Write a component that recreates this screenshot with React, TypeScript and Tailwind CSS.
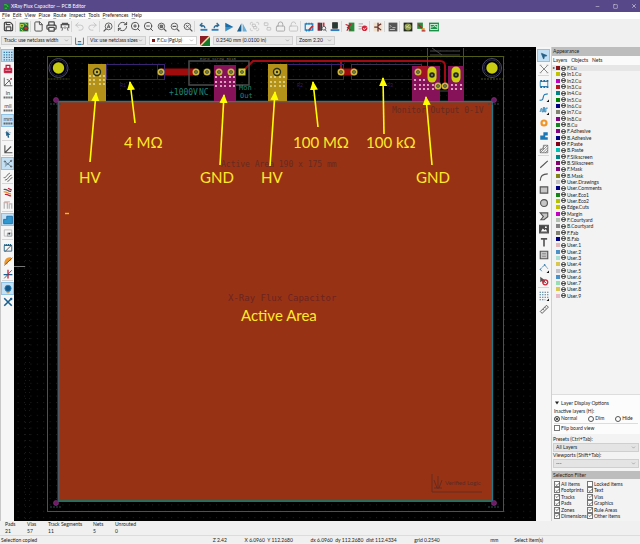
import React, { useState } from 'react';
import {
  Save, File, Printer, Undo2, Redo2, RefreshCw, ZoomIn, ZoomOut,
  Group, Ungroup, Lock, LockOpen, Minus, Square, X, ChevronDown, Check, MousePointer2,
} from 'lucide-react';

interface Tool {
  name: string;
  icon: React.ReactNode;
  active?: boolean;
  gap?: boolean;
}

interface Layer {
  name: string;
  color: string;
}

// small 16x16 drawing used for the icons lucide does not have
function Glyph({ children }: { children: React.ReactNode }) {
  return (
    <svg viewBox="0 0 16 16" className="size-[10px]" fill="none" stroke="#545454" strokeWidth="1.4">
      {children}
    </svg>
  );
}

const dark = 'size-[11px] text-[#484848]';
const faded = 'size-[11px] text-[#c3c3c3]';

const topTools: Tool[] = [
  { name: 'Save', icon: <Save className={dark} strokeWidth={2.6} /> },
  { name: 'Board setup', gap: true, icon: <Glyph><path d="M1 1h14v14H1z" fill="#1c8a3a" stroke="none" /><path d="M2 4h5v4H2zM9 2l4 3M3 11l3 3" stroke="#d5d84a" /><circle cx="11" cy="10" r="3.4" fill="#c5372c" stroke="#383838" /></Glyph> },
  { name: 'Page settings', gap: true, icon: <File className={dark} /> },
  { name: 'Print', icon: <Printer className={dark} strokeWidth={2.6} /> },
  { name: 'Plot', icon: <Glyph><path d="M2 10V4h12v6M4 4V2h8v2" strokeWidth="2" /><path d="M5 8l-2 6M11 8l2 6M8 7v4" /></Glyph> },
  { name: 'Undo', gap: true, icon: <Undo2 className={faded} /> },
  { name: 'Redo', icon: <Redo2 className={faded} /> },
  { name: 'Find', gap: true, icon: <Glyph><circle cx="9" cy="7" r="5.5" /><path d="M5 11l-4 4" strokeWidth="2" /><path d="M7 10l2-6 2 6M7 8h4" /></Glyph> },
  { name: 'Refresh', gap: true, icon: <RefreshCw className={dark} /> },
  { name: 'Zoom in', icon: <ZoomIn className={dark} /> },
  { name: 'Zoom out', icon: <ZoomOut className={dark} /> },
  { name: 'Zoom to fit', icon: <Glyph><circle cx="7" cy="7" r="5.2" /><path d="M11 11l4 4" strokeWidth="2" /><path d="M5 5h4v4H5z" fill="#777" /></Glyph> },
  { name: 'Zoom to objects', icon: <Glyph><circle cx="7" cy="7" r="5.2" /><path d="M11 11l4 4" strokeWidth="2" /><path d="M4 7h6" strokeWidth="2" /></Glyph> },
  { name: 'Zoom to selection', icon: <Glyph><circle cx="7" cy="7" r="5.2" /><path d="M11 11l4 4" strokeWidth="2" /><path d="M5 5l4 4M9 5L5 9" /></Glyph> },
  { name: 'Rotate left', gap: true, icon: <Glyph><path d="M4 14h11v-3H4z" fill="#2f7fb8" stroke="none" /><path d="M11 10c0-3-2-5-7-5M7 1.500L3.500 5 7 8" stroke="#2d6a96" strokeWidth="2" /></Glyph> },
  { name: 'Rotate right', icon: <Glyph><path d="M1 14h11v-3H1z" fill="#2f7fb8" stroke="none" /><path d="M5 10c0-3 2-5 7-5M9 1.500L12.500 5 9 8" stroke="#2d6a96" strokeWidth="2" /></Glyph> },
  { name: 'Flip vertically', icon: <Glyph><path d="M2 1l13 7H2z" fill="#1a6ea8" stroke="none" /><path d="M2 15l13-7H2z" fill="#3b92c8" stroke="none" /></Glyph> },
  { name: 'Flip horizontally', icon: <Glyph><path d="M7 2v13H0z" fill="#1a5f8e" stroke="none" /><path d="M9 2v13h7z" fill="#6caed4" stroke="none" /></Glyph> },
  { name: 'Group', icon: <Group className={faded} /> },
  { name: 'Ungroup', icon: <Ungroup className={faded} /> },
  { name: 'Lock', icon: <Lock className="size-[11px] text-[#a6a6a6]" /> },
  { name: 'Unlock', icon: <LockOpen className={faded} /> },
  { name: 'Footprint editor', gap: true, icon: <Glyph><path d="M2 3h12v10H2z" stroke="#1a81c4" strokeWidth="2" /><path d="M4 1v3M8 1v3M12 1v3M4 12v3M8 12v3" stroke="#1a81c4" strokeWidth="2" /><path d="M14 6l-6 7" stroke="#c92b35" strokeWidth="3" /></Glyph> },
  { name: 'Footprint library', icon: <Glyph><path d="M1 1h4v13H1z" fill="#8b1f33" stroke="none" /><path d="M5 1h3v13H5z" fill="#3c3c3c" stroke="none" /><path d="M9 1h3v6H9z" fill="#c9303c" stroke="none" /><circle cx="11" cy="10" r="3" /><path d="M13 12l2 3" /></Glyph> },
  { name: 'Update from schematic', icon: <Glyph><path d="M4 1h8v9H4z" fill="#243a33" stroke="#3c3c3c" /><path d="M1 13h14" stroke="#2e7bc0" strokeWidth="3" /></Glyph> },
  { name: 'Update board', gap: true, icon: <Glyph><path d="M6 1h9v14H6z" fill="#2b8b3d" stroke="none" /><path d="M1 4l6 2-3 3 6 4M3 14l6-11" stroke="#b3202c" strokeWidth="1.800" /></Glyph> },
  { name: 'Design rules check', icon: <Glyph><path d="M1 3h7M1 7h5M1 11h4" stroke="#9c9c9c" /><circle cx="10.500" cy="10" r="4.500" fill="#cf2639" stroke="none" /><path d="M8.500 10l1.500 2 3-3" stroke="#fff" /></Glyph> },
  { name: 'Schematic editor', gap: true, icon: <Glyph><path d="M1 1h14v14H1z" fill="#f0dfcb" stroke="none" /><path d="M8 1v14M2 8h6M8 6l5-3M8 9l5 4" stroke="#63302b" strokeWidth="2" /></Glyph> },
  { name: 'Scripting console', gap: true, icon: <Glyph><path d="M1 1h14v14H1z" fill="#555" stroke="none" /><path d="M3 5l2 2-2 2M7 9h5M3 12h8" stroke="#c9c9c9" /></Glyph> },
  { name: 'Gerber viewer', gap: true, icon: <Glyph><path d="M1 1h14v14H1z" fill="#202820" stroke="none" /><circle cx="8" cy="8" r="5.500" fill="#8d9b4b" stroke="none" /><path d="M4 6l8 4M5 10l5-6" stroke="#d6d69a" /></Glyph> },
  { name: 'Board viewer', icon: <Glyph><path d="M2 1h9v10H2z" fill="#2b8b3d" stroke="none" /><path d="M4 4l8 9M9 14h6" stroke="#b3202c" strokeWidth="2" /><path d="M9 10h5v3H9z" fill="#d8a327" stroke="none" /></Glyph> },
  { name: 'Fabrication', icon: <Glyph><path d="M0 1h16v14H0z" fill="#1c8f49" stroke="none" /><path d="M2 4h12v8H2zM2 8h4l2-2h2l1 2h3" stroke="#e3f5e6" strokeWidth="1.400" /></Glyph> },
];

const leftTools: Tool[] = [
  { name: 'Grid', active: true, icon: <Glyph><path d="M1 2h14M1 6h14M1 10h14M1 14h14" stroke="#28749f" strokeWidth="2" strokeDasharray="2 2" /></Glyph> },
  { name: 'Grid override', icon: <Glyph><path d="M2 7h12v7H2z" fill="#c2183c" stroke="#c2183c" /><path d="M5 7V2h6v5" stroke="#c2183c" strokeWidth="2" /><path d="M4 10h8" stroke="#fff" strokeDasharray="2 1" /></Glyph> },
  { name: 'Polar coordinates', icon: <Glyph><path d="M2 1v13h13M2 14L12 4" /><path d="M6 4c4 0 6 4 6 8" /><circle cx="13" cy="3" r="1.500" fill="#c2183c" stroke="none" /></Glyph> },
  { name: 'Inches', icon: <Glyph><text x="8" y="8" fontSize="9" textAnchor="middle" fill="#444" stroke="none">in</text><path d="M1 12h14" strokeWidth="3" strokeDasharray="2 1" /></Glyph> },
  { name: 'Mils', icon: <Glyph><text x="8" y="8" fontSize="9" textAnchor="middle" fill="#444" stroke="none">mil</text><path d="M1 12h14" strokeWidth="3" strokeDasharray="2 1" /></Glyph> },
  { name: 'Millimeters', active: true, icon: <Glyph><text x="8" y="8" fontSize="9" textAnchor="middle" fill="#444" stroke="none">mm</text><path d="M1 12h14" strokeWidth="3" strokeDasharray="2 1" /></Glyph> },
  { name: 'Full-window crosshair', icon: <Glyph><path d="M8 2v12M3 6h10" stroke="#9bb8ca" /><path d="M5 3l7 6-3 .5 1 4-2 .5-1-4-2 1z" fill="#215f85" stroke="none" /></Glyph> },
  { name: 'Constrain to 45 degrees', gap: true, icon: <Glyph><path d="M3 2v12h12M3 14L13 4" strokeWidth="1.800" /></Glyph> },
  { name: 'Ratsnest', active: true, gap: true, icon: <Glyph><path d="M3 4l10 8M3 12l10-9M3 8h7" stroke="#607c8c" /><circle cx="3" cy="4" r="1" /><circle cx="13" cy="12" r="1" /><circle cx="13" cy="3" r="1" /></Glyph> },
  { name: 'Curved ratsnest', icon: <Glyph><path d="M1 9c5 1 6-7 10-7M3 13c6 0 6-8 11-8M7 15c4 0 4-6 8-6" /></Glyph> },
  { name: 'Net colors', gap: true, icon: <Glyph><path d="M1 4c6-2 6 4 12 3" stroke="#555" strokeWidth="2" /><path d="M1 8c6-2 6 4 12 3" stroke="#ec8b2d" strokeWidth="2" /><path d="M3 12c5-2 5 3 10 2M8 2l6 3" stroke="#c3203c" strokeWidth="2" /></Glyph> },
  { name: 'Highlight nets', icon: <Glyph><path d="M2 14V4h5v10M10 14V6h4v8" stroke="#b7b7b7" strokeWidth="2" /><path d="M2 3h9" stroke="#e4a9a0" strokeWidth="2" /></Glyph> },
  { name: 'Filled zones', active: true, gap: true, icon: <Glyph><path d="M1 7h5V2h9v12H1z" fill="#3197cf" stroke="#1a6ea8" /></Glyph> },
  { name: 'Zone outlines', icon: <Glyph><path d="M2 3h12v10H2z" stroke="#b8b8b8" /><path d="M7 8h7v5H7z" fill="#dde9ef" stroke="#9c9c9c" /><circle cx="10" cy="9" r="1.500" fill="#333" stroke="none" /></Glyph> },
  { name: 'Sketch pads', gap: true, icon: <Glyph><path d="M2 4h12v9H2z" stroke="#1c5e80" /><path d="M2 3h12" stroke="#1c5e80" strokeWidth="3" strokeDasharray="2 1" /><path d="M3 14L14 3" stroke="#4a4a4a" /></Glyph> },
  { name: 'Sketch vias', icon: <Glyph><path d="M2 13C2 5 6 2 13 2v5c-4 0-6 2-6 6z" fill="#f09a2e" stroke="none" /><path d="M2 15L15 3" /></Glyph> },
  { name: 'Sketch tracks', icon: <Glyph><path d="M1 9h14" stroke="#1a5f8e" strokeWidth="2" /><path d="M8 1v14" stroke="#c2183c" strokeWidth="2" /><path d="M2 15L14 2" stroke="#555" /></Glyph> },
  { name: 'Appearance manager', active: true, gap: true, icon: <Glyph><circle cx="8" cy="7" r="5" fill="#15598a" stroke="#2b88c4" /><path d="M5 13h6l-3 2z" fill="#c78c3a" stroke="none" /></Glyph> },
  { name: 'Properties', icon: <Glyph><path d="M2 2l12 12M14 2L2 14" stroke="#1a5f8e" strokeWidth="2.500" /><circle cx="13" cy="3" r="2" fill="#1a5f8e" stroke="none" /></Glyph> },
];

const corner = <path d="M16 12v4h-4z" fill="#111" stroke="none" />;

const rightTools: Tool[] = [
  { name: 'Select', active: true, icon: <MousePointer2 className="size-[8px] fill-[#255f85] text-[#255f85]" /> },
  { name: 'Local ratsnest', icon: <Glyph><path d="M2 2l12 12M14 2L2 14" stroke="#777" /><path d="M1 2h3M12 14h3M12 2h3M1 14h3" stroke="#999" /></Glyph> },
  { name: 'Add footprint', gap: true, icon: <Glyph><path d="M2 4h12v8H2z" stroke="#1b82bf" /><path d="M2 3h13M2 13h13" stroke="#1e6896" strokeWidth="3" strokeDasharray="3 2" /></Glyph> },
  { name: 'Route tracks', icon: <Glyph><path d="M1 13c8 2 4-7 8-9l5-1" stroke="#1d7ab4" strokeWidth="1.800" />{corner}</Glyph> },
  { name: 'Tune length', icon: <Glyph><path d="M1 10h2V6h2v5h2V4h2v7h2V5h3" stroke="#1d7ab4" strokeWidth="1.400" />{corner}</Glyph> },
  { name: 'Add via', icon: <Glyph><circle cx="8" cy="8" r="4" stroke="#f09426" strokeWidth="3.500" /></Glyph> },
  { name: 'Add zone', icon: <Glyph><path d="M2 7h5V2h7v5h-4v3h4v4H2z" fill="#1c77b5" stroke="none" /></Glyph> },
  { name: 'Rule area', icon: <Glyph><path d="M2 11l4-4M2 14L14 2M6 14l8-8M10 14l4-4M6 6l4-4M7 2h7v12H2V8h5z" strokeWidth="1" /></Glyph> },
  { name: 'Line', gap: true, icon: <Glyph><path d="M2 14L14 3" strokeWidth="1.800" /></Glyph> },
  { name: 'Arc', icon: <Glyph><path d="M2 14C2 7 6 3 14 3" strokeWidth="1.800" /></Glyph> },
  { name: 'Rectangle', icon: <Glyph><path d="M2 3h12v10H2z" fill="#c6c6c6" strokeWidth="1.800" /></Glyph> },
  { name: 'Circle', icon: <Glyph><circle cx="8" cy="8" r="5.500" fill="#c6c6c6" strokeWidth="1.800" /></Glyph> },
  { name: 'Polygon', icon: <Glyph><path d="M2 3h12v6l-6 5H3l4-5z" fill="#c6c6c6" strokeWidth="1.800" /></Glyph> },
  { name: 'Image', icon: <Glyph><path d="M1 2h14v12H1z" fill="#484848" strokeWidth="2" /><path d="M3 12l3-5 3 3 2-2 2 4z" fill="#fff" stroke="none" /><circle cx="11" cy="5" r="1.500" fill="#fff" stroke="none" /></Glyph> },
  { name: 'Text', icon: <Glyph><path d="M3 3h10M8 3v12" strokeWidth="2.600" /></Glyph> },
  { name: 'Text box', icon: <Glyph><path d="M2 2h12v12H2z" fill="#c6c6c6" strokeWidth="1.800" /><path d="M5 6h6M5 10h6" strokeWidth="1.600" stroke="#888" /></Glyph> },
  { name: 'Dimension', icon: <Glyph><path d="M2 10l7-7 5 6M2 10l3 4" stroke="#3a7eae" strokeDasharray="4 1" /><circle cx="2" cy="10" r="1" fill="#3a7eae" stroke="none" /><circle cx="9" cy="3" r="1.300" fill="#3a7eae" stroke="none" />{corner}</Glyph> },
  { name: 'Delete', icon: <Glyph><path d="M2 1v9l3-2 3 4 2-5z" fill="#555" stroke="none" /><circle cx="10" cy="10" r="4" stroke="#cf2639" strokeWidth="2" /><path d="M8 8l4 4" stroke="#cf2639" /></Glyph> },
  { name: 'Grid origin', gap: true, icon: <Glyph><path d="M1 2h14M1 6h14M1 10h14M1 14h9" strokeWidth="1.800" strokeDasharray="2 2" stroke="#38688a" />{corner}</Glyph> },
  { name: 'Measure', icon: <Glyph><path d="M2 12L12 2l3 3L5 15z" fill="#ededed" /><path d="M6 8l2 2M9 5l2 2" /></Glyph> },
];

const layers: Layer[] = [
  { name: 'F.Cu', color: '#8a1414' },
  { name: 'In1.Cu', color: '#c2c200' },
  { name: 'In2.Cu', color: '#c200c2' },
  { name: 'In3.Cu', color: '#b8141e' },
  { name: 'In4.Cu', color: '#008484' },
  { name: 'In5.Cu', color: '#008400' },
  { name: 'In6.Cu', color: '#000084' },
  { name: 'In7.Cu', color: '#848472' },
  { name: 'In8.Cu', color: '#840084' },
  { name: 'B.Cu', color: '#148420' },
  { name: 'F.Adhesive', color: '#840084' },
  { name: 'B.Adhesive', color: '#000084' },
  { name: 'F.Paste', color: '#840014' },
  { name: 'B.Paste', color: '#00c2b4' },
  { name: 'F.Silkscreen', color: '#008484' },
  { name: 'B.Silkscreen', color: '#84006e' },
  { name: 'F.Mask', color: '#840084' },
  { name: 'B.Mask', color: '#848414' },
  { name: 'User.Drawings', color: '#c2c2c2' },
  { name: 'User.Comments', color: '#000084' },
  { name: 'User.Eco1', color: '#148414' },
  { name: 'User.Eco2', color: '#b4c200' },
  { name: 'Edge.Cuts', color: '#c2c200' },
  { name: 'Margin', color: '#c200c2' },
  { name: 'F.Courtyard', color: '#b4c2b4' },
  { name: 'B.Courtyard', color: '#848484' },
  { name: 'F.Fab', color: '#848472' },
  { name: 'B.Fab', color: '#000084' },
  { name: 'User.1', color: '#e0b8bc' },
  { name: 'User.2', color: '#4c92c8' },
  { name: 'User.3', color: '#a8e0d4' },
  { name: 'User.4', color: '#d8c850' },
  { name: 'User.5', color: '#c2c2c8' },
  { name: 'User.6', color: '#4c92c8' },
  { name: 'User.7', color: '#98e0b4' },
  { name: 'User.8', color: '#d8c850' },
  { name: 'User.9', color: '#e8b8c4' },
];

const filters = [
  'All items', 'Locked items', 'Footprints', 'Text', 'Tracks', 'Vias',
  'Pads', 'Graphics', 'Zones', 'Rule Areas', 'Dimensions', 'Other items',
];

const stats = [
  { label: 'Pads', value: '21', width: 'w-[22px]' },
  { label: 'Vias', value: '57', width: 'w-[21px]' },
  { label: 'Track Segments', value: '11', width: 'w-[45px]' },
  { label: 'Nets', value: '5', width: 'w-[22px]' },
  { label: 'Unrouted', value: '0', width: 'w-[30px]' },
];

function ToolButton({ tool }: { tool: Tool }) {
  return (
    <button
      type="button"
      aria-label={tool.name}
      className={`flex size-[13px] shrink-0 items-center justify-center ${tool.active ? 'border border-[#8fc3e8] bg-[#c4e0f4]' : ''}`}
    >
      {tool.icon}
    </button>
  );
}

function Combo({ label, value, className, children }: { label: string; value: string; className: string; children?: React.ReactNode }) {
  return (
    <div className={`flex h-[9px] items-center border border-[#cfcfcf] px-[2px] ${className}`}>
      {children}
      <select aria-label={label} className="min-w-0 flex-1 appearance-none bg-transparent leading-[7px] outline-none" defaultValue={value}>
        <option>{value}</option>
      </select>
      <ChevronDown className="size-[5px] shrink-0 text-[#666]" />
    </div>
  );
}

function TickBox({ label, checked }: { label: string; checked: boolean }) {
  const [on, setOn] = useState(checked);

  return (
    <label className="flex items-center gap-[1px] whitespace-nowrap">
      <span className="grid size-[6px] shrink-0 place-items-center">
        <input type="checkbox" checked={on} onChange={() => setOn(!on)} className="col-start-1 row-start-1 size-[6px] appearance-none border border-[#777] bg-white" />
        {on && <Check className="pointer-events-none col-start-1 row-start-1 size-[5px] text-[#222]" strokeWidth={3} />}
      </span>
      {label}
    </label>
  );
}

function Pad({ x, y, square }: { x: number; y: number; square?: boolean }) {
  return (
    <g>
      {square ? <rect x={x - 3.5} y={y - 3.5} width="7" height="7" fill="#d2cc38" /> : <circle cx={x} cy={y} r="3.5" fill="#d0b840" />}
      <circle cx={x} cy={y} r="1.8" fill="#2b3a1c" />
      <circle cx={x} cy={y} r="0.7" fill="#d8d8b0" />
    </g>
  );
}

function Stitching({ xs, ys, color }: { xs: number[]; ys: number[]; color: string }) {
  return (
    <g fill={color}>
      {ys.map((y) => xs.map((x) => <circle key={`${x}-${y}`} cx={x} cy={y} r="1.1" />))}
    </g>
  );
}

function MountingHole({ x, y }: { x: number; y: number }) {
  return (
    <g fill="none">
      <circle cx={x} cy={y} r="9.5" stroke="#4b4b6c" strokeWidth="1" />
      <circle cx={x} cy={y} r="8" stroke="#23234a" strokeWidth="1" />
      <circle cx={x} cy={y} r="5.7" fill="#c8cc12" />
      <path d={`M${x - 11} ${y + 11}h22`} stroke="#4b5020" strokeDasharray="2 1" />
    </g>
  );
}

const notes = [
  { text: 'HV', x: 79, y: 183 },
  { text: '4 MΩ', x: 124, y: 148 },
  { text: 'GND', x: 200, y: 183 },
  { text: 'HV', x: 261, y: 183 },
  { text: '100 MΩ', x: 293, y: 148 },
  { text: '100 kΩ', x: 366, y: 148 },
  { text: 'GND', x: 416, y: 183 },
  { text: 'Active Area', x: 241, y: 321 },
];

const arrows = [
  [90, 162, 96, 93], [135, 123, 130, 82], [220, 165, 224, 95], [270, 166, 275, 92],
  [318, 127, 313, 82], [384, 134, 383, 78], [432, 165, 426, 97],
];

const fiducials = [[56, 100], [494, 100], [56, 503], [494, 503]];

function Board() {
  return (
    <svg viewBox="14 47 522 474" className="block h-full w-full bg-black">
      <defs>
        <pattern id="grid" x="24" y="50" width="6.4" height="6.4" patternUnits="userSpaceOnUse">
          <rect width="1" height="1" fill="#202020" />
        </pattern>
        <marker id="head" viewBox="0 0 10 10" refX="9" refY="5" markerWidth="9" markerHeight="9" markerUnits="userSpaceOnUse" orient="auto">
          <path d="M0 .5l10 4.500-10 4.500z" fill="#ffff00" />
        </marker>
      </defs>
      <rect x="14" y="47" width="522" height="474" fill="#000" />
      <rect x="14" y="47" width="522" height="474" fill="url(#grid)" />
      <path d="M25.500 50v470M29.500 50v470" stroke="#32100f" strokeDasharray="1 5" />
      <path d="M14 266.500h11" stroke="#777" />
      <rect x="47.500" y="56.500" width="456" height="455" fill="none" stroke="#525a18" />

      {/* copper pour */}
      <rect x="58" y="101" width="434" height="400" fill="#983214" />
      <path d="M58 101.500h434.500V501" fill="none" stroke="#25788a" strokeWidth="1.400" />
      <path d="M58.500 101v400" stroke="#4b5a66" strokeWidth="2" />
      <path d="M58 501h434" stroke="#2c6c5c" strokeWidth="2" />
      {fiducials.map(([x, y]) => (
        <g key={`${x}-${y}`}>
          <circle cx={x} cy={y} r="2.500" fill="#6c1c66" stroke="#8c3480" strokeWidth="0.600" />
          <path d={`M${x - 6} ${y + 4}h12`} stroke="#2b4f4a" strokeDasharray="2 1" />
        </g>
      ))}
      <MountingHole x={58.5} y={68} />
      <MountingHole x={492} y={68} />

      {/* tracks */}
      <path d="M161 72h35M341 72h14" stroke="#a00c0c" strokeWidth="7" />
      <path d="M242 72l11-11h187q5 0 5 5v20M341 61v10" fill="none" stroke="#a00c14" strokeWidth="2" />
      <g fill="none" strokeWidth="1">
        <rect x="106.500" y="64.500" width="58" height="15" stroke="#3a2470" />
        <path d="M157.500 65v14M331.500 65v14" stroke="#22228c" />
        <rect x="287.500" y="64.500" width="56" height="15" stroke="#3a2470" />
        <rect x="351.500" y="64.500" width="70" height="15" stroke="#3c3050" />
        <rect x="189" y="61" width="60" height="24" stroke="#4c4c4c" strokeWidth="1.500" />
        <path d="M427.500 48v43h36V48M430 51h30M430 55h30M432 48l10 7" stroke="#484848" />
      </g>
      <g fontFamily="Liberation Mono, monospace" fontSize="5" fill="#3a1c66">
        <text x="120" y="87">R1</text>
        <text x="297" y="87">R2</text>
        <text x="387" y="87">R3</text>
        <text x="200" y="60" fontSize="4" fill="#707070">Euro Screw 5x15</text>
      </g>

      {/* pads */}
      <rect x="88" y="64" width="18" height="37" fill="#b4921a" />
      <rect x="268" y="64" width="19" height="37" fill="#b4921a" />
      <rect x="214" y="65" width="22" height="36" fill="#86125a" />
      <rect x="412" y="66" width="28" height="35" fill="#86125a" />
      <rect x="448" y="66" width="16" height="35" fill="#86125a" />
      <rect x="418" y="66" width="10" height="11" fill="#a01224" />
      <Stitching xs={[90, 94, 100, 104]} ys={[76, 80, 84]} color="#e4d890" />
      <Stitching xs={[271, 275, 280, 284]} ys={[77, 82, 86]} color="#e4d890" />
      <Stitching xs={[216, 221, 225, 230, 234]} ys={[77, 82, 86]} color="#f0c0d8" />
      <Stitching xs={[415, 420, 424]} ys={[80, 85, 89]} color="#f0c0d8" />
      <Stitching xs={[428, 433]} ys={[85, 89]} color="#f0c0d8" />
      <Stitching xs={[452, 456, 461]} ys={[85, 89]} color="#f0c0d8" />
      {[97, 277].map((x) => (
        <g key={x}>
          <circle cx={x} cy="72" r="3.500" fill="#d6b834" stroke="#26301a" strokeWidth="1.400" />
          <circle cx={x} cy="72" r="1.200" fill="#26301a" />
        </g>
      ))}
      {[161, 196, 207, 219, 231, 341, 354, 418].map((x) => <Pad key={x} x={x} y={72} />)}
      <Pad x={242} y={72} square />
      <Pad x={438} y={86} />
      <Pad x={445} y={86} />
      {[432, 456].map((x) => (
        <g key={x}>
          <rect x={x - 4.5} y="66.500" width="9" height="16" rx="4.500" fill="#ccd010" />
          <circle cx={x} cy="75" r="2.800" fill="#23281c" />
          <circle cx={x} cy="75" r="0.800" fill="#c8c8a0" />
        </g>
      ))}

      {/* silkscreen */}
      <g fontFamily="DejaVu Sans Mono, monospace" fontSize="8">
        <g fill="#208272">
          <text x="169" y="95">+1000V</text>
          <text x="199" y="95">NC</text>
          <text x="239" y="90" fontSize="7">Mon</text>
          <text x="240" y="98" fontSize="7">Out</text>
        </g>
        <g fill="#662a20">
          <text x="221" y="167">Active Area 190 x 175 mm</text>
          <text x="392" y="113">Monitor Output 0-1V</text>
        </g>
        <g fill="#6b2422">
          <text x="228" y="301" fontSize="9">X-Ray Flux Capacitor</text>
        </g>
      </g>
      <g fill="none" stroke="#662a20">
        <path d="M432 492h50M432 474v18M434 480l3 8M438 476v13M442 480l-3 8M434 488h8" />
      </g>
      <text x="445" y="485" fontFamily="Lato, sans-serif" fontSize="6" fill="#5a2a26">Verified Logic</text>
      <path d="M65 213.500h4" stroke="#e8c010" strokeWidth="1.400" />

      {/* notes */}
      <g stroke="#ffff00" strokeWidth="1.600">
        {arrows.map(([x1, y1, x2, y2]) => (
          <line key={x1} x1={x1} y1={y1} x2={x2} y2={y2} markerEnd="url(#head)" />
        ))}
      </g>
      <g fontFamily="Lato, Noto Sans, sans-serif" fontSize="15" fill="#ffe928">
        {notes.map((note) => <text key={note.text + note.x} x={note.x} y={note.y}>{note.text}</text>)}
      </g>
    </svg>
  );
}

function AppearancePanel() {
  const [inactive, setInactive] = useState('Normal');

  return (
    <aside className="flex w-[89px] shrink-0 flex-col border-l border-[#d0d0d0] bg-[#f3f3f3]">
      <h2 className="h-[9px] bg-[#bdbdbd] px-[1px] leading-[9px]">Appearance</h2>
      <div role="tablist" className="flex h-[9px] items-center gap-[4px] bg-[#fafafa] px-[1px]">
        <button type="button" role="tab" aria-selected="true">Layers</button>
        <button type="button" role="tab">Objects</button>
        <button type="button" role="tab">Nets</button>
      </div>
      <ul className="flex h-[234px] flex-col justify-between">
        {layers.map((layer, i) => (
          <li key={layer.name} className={`flex h-[6px] items-center gap-[1px] pl-[1px] leading-[6px] ${i === 0 ? 'bg-[#e6e6e6]' : ''}`}>
            <span className="w-[2px] text-[4px]">{i === 0 ? '▸' : ''}</span>
            <span className="size-[4px]" style={{ backgroundColor: layer.color }} />
            <svg viewBox="0 0 10 10" className="size-[5px]" fill="none" stroke="#333" strokeWidth="1.800">
              <circle cx="5" cy="5" r="4" />
              <path d="M1 5h8" />
            </svg>
            <span>{layer.name}</span>
          </li>
        ))}
      </ul>
      <div className="mt-auto flex flex-col gap-[1px] border-t border-[#ddd] bg-[#fcfcfc] px-[2px] pt-[4px] pb-[2px]">
        <div className="flex h-[8px] items-center gap-[2px] px-[1px]">
          <svg viewBox="0 0 8 8" className="size-[4px]"><path d="M0 1h8L4 7z" fill="#222" /></svg>
          Layer Display Options
        </div>
        <fieldset>
          <legend className="h-[7px] leading-[7px]">Inactive layers (H):</legend>
          <div className="flex h-[7px] items-center gap-[11px]">
            {['Normal', 'Dim', 'Hide'].map((mode) => (
              <label key={mode} className="flex items-center gap-[1px]">
                <input
                  type="radio"
                  name="inactive"
                  checked={inactive === mode}
                  onChange={() => setInactive(mode)}
                  className="size-[6px] appearance-none rounded-full border border-[#555] bg-white checked:bg-[#222] checked:shadow-[inset_0_0_0_1px_white]"
                />
                {mode}
              </label>
            ))}
          </div>
        </fieldset>
        <div className="flex h-[9px] items-center border-t border-[#ddd]">
          <TickBox label="Flip board view" checked={false} />
        </div>
      </div>
      <div className="flex flex-col px-[1px] pt-[2px] pb-[3px]">
        <span className="h-[7px] leading-[7px]">Presets (Ctrl+Tab):</span>
        <Combo label="Presets" value="All Layers" className="bg-[#e4e4e4]" />
        <span className="h-[7px] leading-[7px]">Viewports (Shift+Tab):</span>
        <Combo label="Viewports" value="---" className="bg-[#e4e4e4]" />
      </div>
      <h2 className="h-[8px] bg-[#bdbdbd] px-[1px] leading-[8px]">Selection Filter</h2>
      <div className="grid h-[42px] grid-cols-[33px_1fr] content-between px-[2px] py-[2px] leading-[6px]">
        {filters.map((name) => <TickBox key={name} label={name} checked={name !== 'Locked items'} />)}
      </div>
    </aside>
  );
}

function App() {
  return (
    <div className="flex min-h-screen flex-col bg-[#f0f0f0] font-[Lato,sans-serif] text-[5px] leading-[7px] text-[#222]">
      <header className="flex h-[12px] items-center bg-[#57488a] px-[3px] text-white">
        <svg viewBox="0 0 12 12" className="size-[7px]">
          <rect width="12" height="12" rx="1" fill="#167a2c" />
          <path d="M2 3h4l3 4M3 9h4" fill="none" stroke="#5cc66c" strokeWidth="1.500" />
        </svg>
        <h1 className="ml-[1px] flex-1">XRay Flux Capacitor — PCB Editor</h1>
        <div className="flex gap-[13px]">
          <button type="button" aria-label="Minimize"><Minus className="size-[5px]" /></button>
          <button type="button" aria-label="Maximize"><Square className="size-[5px]" /></button>
          <button type="button" aria-label="Close"><X className="size-[6px]" /></button>
        </div>
      </header>

      <nav className="flex h-[7px] items-center gap-[3px] bg-white px-[2px]">
        {['File', 'Edit', 'View', 'Place', 'Route', 'Inspect', 'Tools', 'Preferences', 'Help'].map((item) => (
          <button key={item} type="button"><span className="underline decoration-[#aaa]">{item[0]}</span>{item.slice(1)}</button>
        ))}
      </nav>

      <div className="flex h-[15px] items-center px-[2px]">
        {topTools.map((tool) => (
          <React.Fragment key={tool.name}>
            {tool.gap && <span className="mr-[1px] h-[11px] w-[1px] bg-[#d6d6d6]" />}
            <ToolButton tool={tool} />
          </React.Fragment>
        ))}
      </div>

      <div className="flex h-[13px] items-center gap-[3px] px-[1px]">
        <Combo label="Track width" value="Track: use netclass width" className="w-[71px] bg-[#e8e8e8]" />
        <button type="button" aria-label="Auto track width" className="flex w-[9px] justify-center">
          <Glyph>
            <path d="M1 2v12h4M15 2v12h-4" />
            <path d="M5 9h6M5 14h6" stroke="#2c7cb0" strokeWidth="2" />
          </Glyph>
        </button>
        <Combo label="Via size" value="Via: use netclass sizes" className="w-[59px] bg-[#e8e8e8]" />
        <Combo label="Active layer" value="F.Cu (PgUp)" className="w-[48px] gap-[2px] bg-white">
          <span className="size-[3px] bg-[#8a1414]" />
        </Combo>
        <svg viewBox="0 0 10 10" className="size-[10px]">
          <path d="M0 0h10L0 10z" fill="#8c1d24" />
          <path d="M10 0v10H0z" fill="#157a2c" />
          <path d="M0 10L10 0" stroke="#e6dc9c" strokeWidth="1.500" />
        </svg>
        <Combo label="Grid size" value="0.2540 mm (0.0100 in)" className="w-[80px] bg-[#e8e8e8]" />
        <Combo label="Zoom" value="Zoom 2.20" className="w-[39px] bg-[#e8e8e8]" />
      </div>

      <main className="flex flex-1">
        <div className="flex w-[14px] shrink-0 flex-col items-center border-l border-[#c8c8c8] bg-[#f6f6f6] pt-[2px]">
          {leftTools.map((tool) => (
            <React.Fragment key={tool.name}>
              {tool.gap && <span className="mb-[1px] h-[1px] w-[11px] bg-[#d6d6d6]" />}
              <ToolButton tool={tool} />
            </React.Fragment>
          ))}
        </div>
        <div className="min-w-0 flex-1 bg-black">
          <Board />
        </div>
        <div className="flex w-[15px] shrink-0 flex-col items-center bg-[#f6f6f6] pt-[2px]">
          {rightTools.map((tool) => (
            <React.Fragment key={tool.name}>
              {tool.gap && <span className="mb-[1px] h-[1px] w-[11px] bg-[#d6d6d6]" />}
              <ToolButton tool={tool} />
            </React.Fragment>
          ))}
        </div>
        <AppearancePanel />
      </main>

      <dl className="flex h-[14px] items-center px-[5px]">
        {stats.map((stat) => (
          <div key={stat.label} className={stat.width}>
            <dt className="h-[7px] whitespace-nowrap">{stat.label}</dt>
            <dd className="h-[7px]">{stat.value}</dd>
          </div>
        ))}
      </dl>
      <footer className="grid h-[9px] grid-cols-[minmax(0,212fr)_minmax(0,32fr)_minmax(0,66fr)_minmax(0,104fr)_minmax(0,76fr)_minmax(0,24fr)_minmax(0,125fr)] items-center border-t border-[#dcdcdc] px-[1px] whitespace-pre">
        <span>Selection copied</span>
        <span>Z 2.42</span>
        <span>X 6.0960  Y 112.2680</span>
        <span>dx 6.0960  dy 112.2680  dist 112.4334</span>
        <span>grid 0.2540</span>
        <span>mm</span>
        <span>Select item(s)</span>
      </footer>
    </div>
  );
}

export default App;
